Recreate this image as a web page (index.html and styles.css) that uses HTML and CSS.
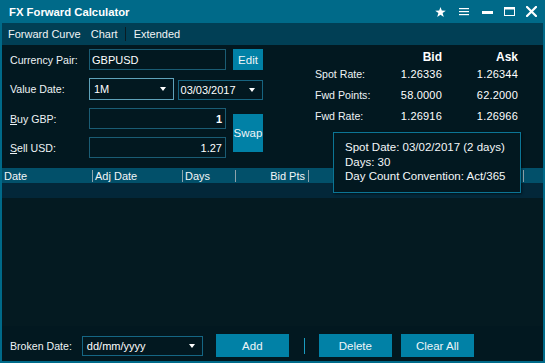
FILE: index.html
```html
<!DOCTYPE html>
<html>
<head>
<meta charset="utf-8">
<link rel="stylesheet" href="styles.css">
</head>
<body>
<div class="window">
  <div class="titlebar">
    <span class="title">FX Forward Calculator</span>
    <div class="controls">
      <svg class="ic-star" width="11" height="10" viewBox="0 0 11 10"><polygon fill="#fff" points="5.5,0 6.8,3.6 10.8,3.7 7.6,6.1 8.8,10 5.5,7.7 2.2,10 3.4,6.1 0.2,3.7 4.2,3.6"/></svg>
      <svg class="ic-menu" width="10" height="8" viewBox="0 0 10 8"><rect x="0" y="0" width="10" height="1.2" fill="#fff"/><rect x="0" y="3" width="10" height="1.2" fill="#fff"/><rect x="0" y="6" width="10" height="1.2" fill="#fff"/></svg>
      <svg class="ic-min" width="11" height="3" viewBox="0 0 11 3"><rect width="11" height="3" fill="#fff"/></svg>
      <svg class="ic-max" width="11" height="9" viewBox="0 0 11 9"><rect x="0.5" y="0.5" width="10" height="8" fill="none" stroke="#fff" stroke-width="1"/><rect x="0" y="0" width="11" height="2.5" fill="#fff"/></svg>
      <svg class="ic-close" width="11" height="11" viewBox="0 0 11 11"><path d="M1 1 L10 10 M10 1 L1 10" stroke="#fff" stroke-width="2.2" stroke-linecap="square"/></svg>
    </div>
  </div>
  <div class="frame">
    <div class="menubar">
      <span class="menu-item">Forward Curve</span>
      <span class="menu-item chart">Chart</span>
      <span class="menu-sep"></span>
      <span class="menu-item">Extended</span>
    </div>
    <div class="top">
      <div class="form">
        <span class="lbl">Currency Pair:</span>
        <div class="field">GBPUSD</div>
        <div class="btn">Edit</div>

        <span class="lbl">Value Date:</span>
        <div class="selects">
          <div class="select focus"><span>1M</span><i class="arrow"></i></div>
          <div class="select date"><span>03/03/2017</span><i class="arrow"></i></div>
        </div>

        <span class="lbl"><u>B</u>uy GBP:</span>
        <div class="field num"><b>1</b></div>
        <div class="btn swap">Swap</div>

        <span class="lbl"><u>S</u>ell USD:</span>
        <div class="field num">1.27</div>
      </div>
      <div class="rates">
        <span></span><span class="hd">Bid</span><span class="hd">Ask</span>
        <span class="rl">Spot Rate:</span><span class="rv">1.26336</span><span class="rv">1.26344</span>
        <span class="rl">Fwd Points:</span><span class="rv">58.0000</span><span class="rv">62.2000</span>
        <span class="rl">Fwd Rate:</span><span class="rv">1.26916</span><span class="rv">1.26966</span>
      </div>
    </div>
    <div class="table">
      <div class="thead">
        <span class="th w91">Date</span>
        <span class="th w90">Adj Date</span>
        <span class="th w53">Days</span>
        <span class="th w73 right">Bid Pts</span>
        <span class="th w73"></span>
        <span class="th w71"></span>
        <span class="th w71"></span>
        <span class="th fill"></span>
      </div>
      <div class="trow"></div>
      <div class="tbody"></div>
    </div>
    <div class="bottombar">
      <span class="lbl">Broken Date:</span>
      <div class="select broken"><span>dd/mm/yyyy</span><i class="arrow"></i></div>
      <div class="btn wide add">Add</div>
      <span class="vsep"></span>
      <div class="btn wide">Delete</div>
      <div class="btn wide clear">Clear All</div>
    </div>
  </div>
  <div class="tooltip">
    <div>Spot Date: 03/02/2017 (2 days)</div>
    <div>Days: 30</div>
    <div>Day Count Convention: Act/365</div>
  </div>
</div>
</body>
</html>
```

FILE: styles.css
```css
* { box-sizing: border-box; margin: 0; padding: 0; }
html, body { width: 545px; height: 363px; overflow: hidden; background: #021820; }
body { font-family: "Liberation Sans", Arial, sans-serif; font-size: 11px; color: #fff; }

.window { width: 545px; height: 363px; display: flex; flex-direction: column; position: relative; }

.titlebar { height: 23px; background: #006a89; display: flex; align-items: center; padding: 0 8px 0 9px; }
.title { font-weight: bold; font-size: 11.3px; flex: 1; padding-top: 1px; }
.controls { display: flex; align-items: center; }
.controls svg { display: block; }
.ic-star { margin-top: 1px; }
.ic-menu { margin-left: 13px; margin-top: 1px; }
.ic-min { margin-left: 13px; margin-top: 2px; }
.ic-max { margin-left: 11px; margin-top: -1px; }
.ic-close { margin-left: 11px; margin-top: -1px; }

.frame { flex: 1; display: flex; flex-direction: column; border: 2px solid #006a89; border-top: 0; background: #021820; min-height: 0; }

.menubar { height: 22px; flex: none; background: #013f55; display: flex; align-items: center; padding-left: 6px; }
.menu-item { font-size: 11px; color: #f0f4f6; }
.menu-item.chart { margin-left: 10px; }
.menu-sep { width: 1px; height: 14px; background: #0a1c24; margin: 0 8px 0 7px; }

.top { height: 123px; flex: none; display: flex; }

.form { display: grid; grid-template-columns: 72px 137px 30px; grid-template-rows: 21px 22px 21px 21px; column-gap: 7px; row-gap: 8px; padding: 4px 0 0 8px; }
.lbl { align-self: center; font-size: 10.6px; color: #eef3f5; white-space: nowrap; }
.lbl u { text-decoration: underline; text-underline-offset: 1px; }

.field { border: 1px solid #1a5c74; display: flex; align-items: center; padding: 0 3px 0 2px; font-size: 11px; }
.field.num { justify-content: flex-end; }
.field b { font-weight: bold; }

.btn { background: #0181a6; display: flex; align-items: center; justify-content: center; font-size: 11.5px; color: #eef5f8; }
.btn.swap { grid-row: 3 / span 2; grid-column: 3; align-self: center; height: 38px; }

.selects { grid-column: 2 / span 2; display: flex; align-items: center; gap: 4px; }
.select { border: 1px solid #176480; display: flex; align-items: center; justify-content: space-between; font-size: 11px; }
.select.focus { width: 85px; height: 22px; border-color: #5fa2ba; padding: 0 7px 0 4px; }
.select.date { width: 86px; height: 20px; padding: 0 7px 0 2px; margin-top: 2px; }
.arrow { display: block; width: 0; height: 0; border-left: 3px solid transparent; border-right: 3px solid transparent; border-top: 4px solid #fff; }

.rates { margin-left: auto; margin-right: 25px; display: grid; grid-template-columns: 80px 47px 76px; grid-template-rows: 15px 20px 21px 21px; padding-top: 4px; align-items: center; font-size: 11px; }
.hd { font-weight: bold; font-size: 12px; text-align: right; }
.rl { color: #eef3f5; font-size: 10.6px; }
.rv { text-align: right; letter-spacing: 0.2px; }

.table { flex: 1; display: flex; flex-direction: column; min-height: 0; }
.thead { height: 15px; background: #02506a; display: flex; flex: none; }
.th { display: flex; align-items: center; padding: 0 2px; font-size: 11px; color: #f2f6f8; white-space: nowrap;
  background: linear-gradient(#8ea3ab, #8ea3ab) right center / 1px 12px no-repeat; }
.th.right { justify-content: flex-end; padding-right: 4px; }
.w91 { width: 91px; }
.w90 { width: 90px; }
.w53 { width: 53px; }
.w73 { width: 73px; }
.w71 { width: 71px; }
.th.fill { flex: 1; background: none; }
.trow { height: 15px; flex: none; background: #032739; }
.tbody { flex: 1; background: #041a21; }

.bottombar { height: 35px; flex: none; display: flex; align-items: center; padding: 4px 0 0 8px; }
.bottombar .lbl { margin-right: 10px; }
.select.broken { width: 121px; height: 20px; border-color: #156684; padding: 0 7px 0 4px; }
.btn.wide { width: 73px; height: 23px; }
.btn.add { margin-left: 13px; }
.vsep { width: 1px; height: 16px; background: #1a9cc0; margin: 0 14px 0 15px; }
.btn.clear { margin-left: 9px; }

.tooltip { position: absolute; left: 333px; top: 132px; width: 188px; height: 61px; border: 1px solid #0b7595; background: #021820; padding: 7px 0 0 11px; font-size: 11.5px; line-height: 14.5px; color: #f4f7f8; box-shadow: 1px 1px 2px rgba(0,0,0,0.5); white-space: nowrap; }
```
